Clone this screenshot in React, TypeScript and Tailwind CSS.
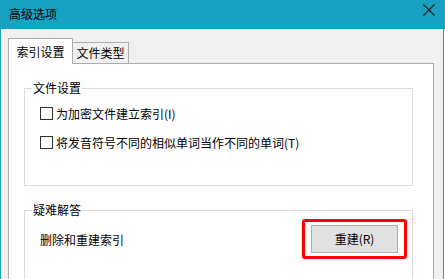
export default function App() {
  return (
    <div
      className="w-[445px] h-[279px] overflow-hidden flex flex-col bg-white text-[12px] text-black"
      style={{ fontFamily: '"Noto Sans CJK SC", "Noto Sans", sans-serif' }}
    >
      {/* Title bar */}
      <div className="h-[29px] shrink-0 bg-[#18a1c1] flex items-start">
        <span className="ml-[9px] mt-[5px] leading-[18px]">高级选项</span>
        <div className="ml-auto mr-[10px] mt-[4px] w-[12px] h-[12px]">
          <svg viewBox="0 0 12 12" className="w-[12px] h-[12px]">
            <path d="M0.5 0.5 L11.5 11.5 M11.5 0.5 L0.5 11.5" stroke="#1a1a1a" strokeWidth="1.1" fill="none" />
          </svg>
        </div>
      </div>

      {/* Body */}
      <div className="flex-1 min-h-0 mr-px bg-[#f0f0f0] border-l border-r border-[#18a1c1] pt-[8px] pl-[7px] flex flex-col">
        {/* Tabs */}
        <div className="flex items-end h-[26px] shrink-0">
          <div className="relative z-10 w-[65px] h-[26px] -mb-px bg-white border border-b-0 border-[#adadad] flex items-center justify-center leading-[16px]">
            索引设置
          </div>
          <div className="w-[57px] h-[21px] -ml-px bg-[#f0f0f0] border border-b-0 border-[#adadad] flex items-center justify-center leading-[16px]">
            文件类型
          </div>
        </div>

        {/* Tab panel */}
        <div className="w-[426px] flex-1 bg-white border border-[#adadad] pt-[24px] pl-[15px] flex flex-col gap-[24px]">
          {/* 文件设置 */}
          <div className="relative w-[389px] h-[98px] shrink-0 border border-[#dcdcdc] pt-[16px] pl-[15px] flex flex-col gap-[12px]">
            <span className="absolute -top-[9px] left-[7px] bg-white px-px leading-[16px]">文件设置</span>
            <label className="h-[17px] flex items-center gap-[3px]">
              <span className="w-[13px] h-[13px] border border-[#333333] bg-white" />
              <span className="leading-[16px]">为加密文件建立索引(I)</span>
            </label>
            <label className="h-[17px] flex items-center gap-[3px]">
              <span className="w-[13px] h-[13px] border border-[#333333] bg-white" />
              <span className="leading-[16px]">将发音符号不同的相似单词当作不同的单词(T)</span>
            </label>
          </div>

          {/* 疑难解答 */}
          <div className="relative w-[389px] h-[90px] shrink-0 border border-[#dcdcdc] pt-[8px] pl-[15px] pr-[5px] flex items-start justify-between">
            <span className="absolute -top-[9px] left-[7px] bg-white px-px leading-[16px]">疑难解答</span>
            <span className="leading-[16px] mt-[13px]">删除和重建索引</span>
            <div className="border-[3px] border-[#ff0000] rounded-[3px] px-[6px] py-[3px]">
              <button className="w-[87px] h-[28px] bg-[#e1e1e1] border border-[#adadad] flex items-center justify-center leading-[16px]">
                重建(R)
              </button>
            </div>
          </div>
        </div>
      </div>
    </div>
  );
}
